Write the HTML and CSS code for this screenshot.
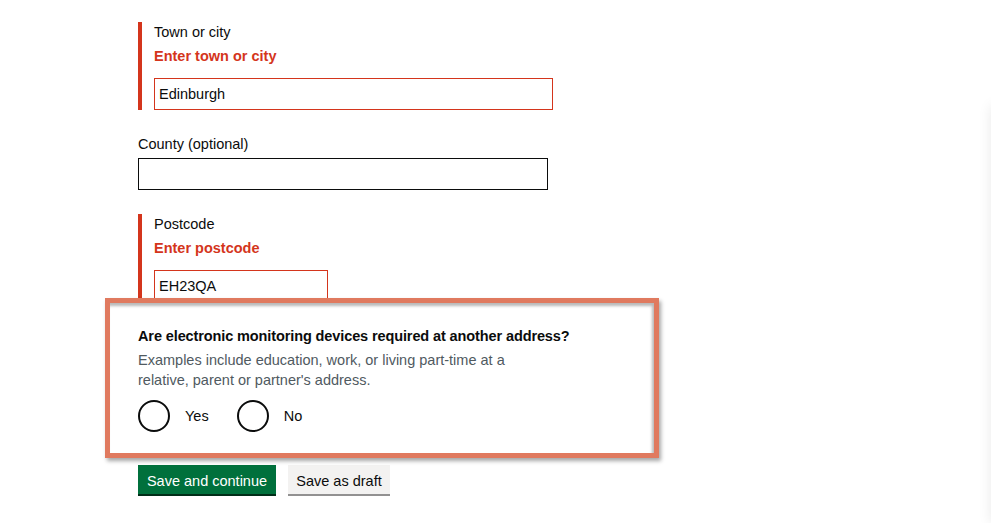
FILE: index.html
```html
<!DOCTYPE html>
<html lang="en">
<head>
<meta charset="utf-8">
<title>Address</title>
<link rel="stylesheet" href="styles.css">
</head>
<body>
<div class="side-panel"></div>
<main class="form">
  <div class="group group--error">
    <label class="label">Town or city</label>
    <p class="error">Enter town or city</p>
    <div class="input input--error input--wide">Edinburgh</div>
  </div>

  <div class="group">
    <label class="label">County (optional)</label>
    <div class="input input--county"></div>
  </div>

  <div class="group group--error group--last">
    <label class="label">Postcode</label>
    <p class="error">Enter postcode</p>
    <div class="input input--error input--short">EH23QA</div>
  </div>

  <fieldset class="highlight">
    <legend class="question">Are electronic monitoring devices required at another address?</legend>
    <p class="hint">Examples include education, work, or living part-time at a relative, parent or partner's address.</p>
    <div class="radios">
      <label class="radio"><span class="radio__circle"></span><span class="radio__label">Yes</span></label>
      <label class="radio"><span class="radio__circle"></span><span class="radio__label">No</span></label>
    </div>
  </fieldset>

  <div class="buttons">
    <button class="button button--primary">Save and continue</button>
    <button class="button button--secondary">Save as draft</button>
  </div>
</main>
</body>
</html>
```

FILE: styles.css
```css
* { box-sizing: border-box; }

html, body {
  margin: 0;
  padding: 0;
  background: #ffffff;
  overflow: hidden;
}

body {
  font-family: "Liberation Sans", Arial, sans-serif;
  font-size: 14.5px;
  line-height: 20px;
  color: #0b0c0c;
  width: 991px;
  height: 523px;
  position: relative;
}

.side-panel {
  position: absolute;
  top: 106px;
  left: 991px;
  width: 40px;
  height: 417px;
  background: #fff;
  box-shadow: 0 0 14px rgba(0, 0, 0, 0.09);
}

.form {
  padding: 22px 0 0 138px;
  display: flex;
  flex-direction: column;
  align-items: flex-start;
}

.group {
  display: flex;
  flex-direction: column;
  align-items: flex-start;
  margin-bottom: 24px;
}

.group--error {
  border-left: 4px solid #d4351c;
  padding-left: 12px;
}

.group--last {
  margin-bottom: 0;
}

.label {
  display: block;
  margin-bottom: 4px;
}

.error {
  margin: 0 0 12px;
  color: #d4351c;
  font-weight: bold;
}

.input {
  height: 32px;
  border: 1px solid #0b0c0c;
  padding: 5px 4px;
  line-height: 20px;
  background: #fff;
}

.input--error { border-color: #d4351c; }
.input--wide { width: 399px; }
.input--county { width: 410px; }
.input--short { width: 174px; }

.highlight {
  position: relative;
  margin: -4px 0 0 -33px;
  width: 554px;
  border: 5px solid #e07a5f;
  padding: 23px 20px 21px 28px;
  background: #fff;
  box-shadow: 2px 3px 4px rgba(0, 0, 0, 0.35), inset -2px 3px 3px rgba(0, 0, 0, 0.28);
  min-width: 0;
}

.question {
  float: left;
  width: 100%;
  padding: 0;
  margin: 0 0 4px;
  font-weight: bold;
  letter-spacing: -0.11px;
}

.hint {
  clear: both;
  margin: 0 0 10px;
  color: #505a5f;
  max-width: 400px;
}

.radios {
  display: flex;
  gap: 28px;
}

.radio {
  display: flex;
  align-items: center;
  height: 32px;
}

.radio__circle {
  width: 32px;
  height: 32px;
  border: 2px solid #0b0c0c;
  border-radius: 50%;
  background: #fff;
}

.radio__label {
  margin-left: 15px;
}

.buttons {
  display: flex;
  gap: 12px;
  margin-top: 7px;
}

.button {
  font-family: inherit;
  font-size: 14.5px;
  line-height: 19px;
  border: 0;
  border-radius: 0;
  padding: 7px 8px 3px;
  height: 29px;
  cursor: pointer;
}

.button--primary {
  width: 138px;
  background: #00703c;
  color: #ffffff;
  box-shadow: 0 2px 0 #002d18;
}

.button--secondary {
  width: 102px;
  background: #f3f2f1;
  color: #0b0c0c;
  box-shadow: 0 2px 0 #929191;
}
```
